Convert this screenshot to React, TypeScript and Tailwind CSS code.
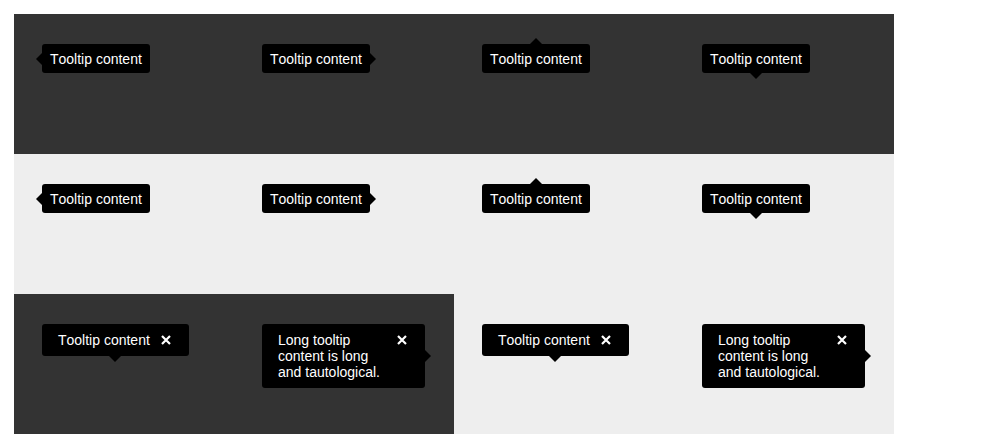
import React from "react";

type Side = "left" | "right" | "top" | "bottom";

function Arrow({ side }: { side: Side }) {
  if (side === "left")
    return (
      <svg className="absolute left-[-6px] top-1/2 -translate-y-1/2" width="6" height="12" viewBox="0 0 6 12">
        <path d="M6 0 L0 6 L6 12 Z" fill="#000" />
      </svg>
    );
  if (side === "right")
    return (
      <svg className="absolute right-[-6px] top-1/2 -translate-y-1/2" width="6" height="12" viewBox="0 0 6 12">
        <path d="M0 0 L6 6 L0 12 Z" fill="#000" />
      </svg>
    );
  if (side === "top")
    return (
      <svg className="absolute top-[-6px] left-1/2 -translate-x-1/2" width="12" height="6" viewBox="0 0 12 6">
        <path d="M0 6 L6 0 L12 6 Z" fill="#000" />
      </svg>
    );
  return (
    <svg className="absolute bottom-[-6px] left-1/2 -translate-x-1/2" width="12" height="6" viewBox="0 0 12 6">
      <path d="M0 0 L6 6 L12 0 Z" fill="#000" />
    </svg>
  );
}

function Simple({ side }: { side: Side }) {
  return (
    <div className="relative inline-block rounded-[3px] bg-black px-2 pt-[5px] pb-[3px] text-[14px] leading-[21px] text-white">
      Tooltip content
      <Arrow side={side} />
    </div>
  );
}

function Closable({ side, text }: { side: Side; text: string }) {
  return (
    <div className="relative inline-flex items-start rounded-[3px] bg-black py-2 pl-4 pr-[18px] text-[14px] leading-[16px] text-white">
      <span className="max-w-[108px]">{text}</span>
      <svg className="ml-[11px] mt-[3px] shrink-0" width="10" height="10" viewBox="0 0 10 10">
        <path d="M1 1 L9 9 M9 1 L1 9" stroke="#fff" strokeWidth="2.2" strokeLinecap="butt" />
      </svg>
      <Arrow side={side} />
    </div>
  );
}

function Cell({ children, dark }: { children: React.ReactNode; dark: boolean }) {
  return (
    <div className={`h-[140px] w-[220px] pl-[28px] pt-[30px] ${dark ? "bg-[#333333]" : "bg-[#eeeeee]"}`}>
      {children}
    </div>
  );
}

export default function App() {
  const sides: Side[] = ["left", "right", "top", "bottom"];
  return (
    <div
      className="min-h-[448px] w-[1008px] bg-white p-[14px] [font-kerning:none]"
      style={{ fontFamily: '"Liberation Sans", Arial, sans-serif' }}
    >
      <div className="flex w-[880px]">
        {sides.map((s) => (
          <Cell key={s} dark>
            <Simple side={s} />
          </Cell>
        ))}
      </div>
      <div className="flex w-[880px]">
        {sides.map((s) => (
          <Cell key={s} dark={false}>
            <Simple side={s} />
          </Cell>
        ))}
      </div>
      <div className="flex w-[880px]">
        <Cell dark>
          <Closable side="bottom" text="Tooltip content" />
        </Cell>
        <Cell dark>
          <Closable side="right" text="Long tooltip content is long and tautological." />
        </Cell>
        <Cell dark={false}>
          <Closable side="bottom" text="Tooltip content" />
        </Cell>
        <Cell dark={false}>
          <Closable side="right" text="Long tooltip content is long and tautological." />
        </Cell>
      </div>
    </div>
  );
}
